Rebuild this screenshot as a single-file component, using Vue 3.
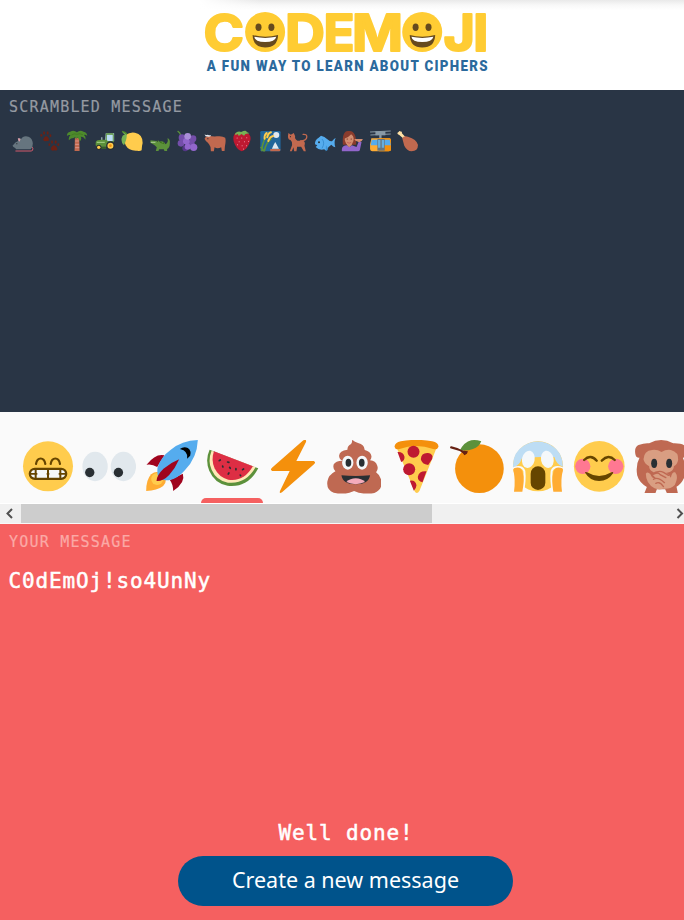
<script setup>
// Small icons: 22px squares, three drawing units to the pixel.
const scrambled = [
  { name: 'rat', box: '34.5 114 66 66', art: `<path d="M46 177H92Q98 177 97 169Q96 163 90 164" fill="none" stroke="#d45b6d" stroke-width="3" stroke-linecap="round"/><path d="M36 161Q45 149 53 147Q51 140 58 139Q64 142 66 136Q74 130 84 134Q96 139 97 154Q98 165 90 172H47Q45 167 39 165Z" fill="#66757f"/><path d="M52 139Q58 137 60 142L57 149Q52 146 52 139" fill="#d99da8"/><circle cx="49" cy="155" r="1.8" fill="#292f33"/>` },
  { name: 'paws', box: '116.9 114 66 66', art: `<g fill="#6b2115"><path d="M129 143Q133 133 138 133Q144 133 147 143Q147 148 140 147Q132 149 129 143M152 171Q156 160 162 160Q168 160 172 171Q172 177 164 175Q154 178 152 171"/><ellipse cx="124" cy="130" rx="3" ry="4"/><ellipse cx="132" cy="123" rx="3" ry="5"/><ellipse cx="143" cy="123" rx="3" ry="5"/><ellipse cx="151" cy="131" rx="3" ry="4"/><ellipse cx="148" cy="158" rx="3" ry="4"/><ellipse cx="156" cy="150" rx="3" ry="5"/><ellipse cx="167" cy="150" rx="3" ry="5"/><ellipse cx="175" cy="158" rx="3" ry="4"/></g>` },
  { name: 'palm', box: '199.3 114 66 66', art: `<path d="M226 137H239L240 177H225Z" fill="#c1694f"/><path d="M227 147h11M227 157h11M227 167h12" stroke="#e6aaaa" stroke-width="2"/><path d="M232 121Q223 113 212 119Q202 120 202 132Q208 127 213 130Q206 134 208 145Q214 138 222 138L227 135L229 142L234 136Q239 143 241 148Q248 140 243 134Q253 133 257 143Q260 134 253 129Q258 127 263 132Q263 121 252 119Q241 112 232 121" fill="#4d8a2c"/><path d="M216 129Q225 123 232 127Q240 123 250 128" fill="none" stroke="#3e721d" stroke-width="2"/>` },
  { name: 'tractor', box: '281.7 114 66 66', art: `<path d="M317 124H342V148H315Z" fill="#bbddf5"/><path d="M318 124h22v4h-22zM317 127h3v20h-3zM338 127h3v22h-3z" fill="#5c913b"/><path d="M305 136v11" stroke="#99aab5" stroke-width="4"/><path d="M287 150Q289 143 304 143H319L324 148H340V164H289Q285 160 287 150" fill="#5c913b"/><path d="M290 151h24" stroke="#a6d388" stroke-width="3"/><circle cx="331" cy="161" r="13" fill="#292f33"/><circle cx="331" cy="161" r="9" fill="#ffcc4d"/><circle cx="331" cy="161" r="4" fill="#f4900c"/><circle cx="296" cy="166" r="8" fill="#292f33"/><circle cx="296" cy="166" r="5" fill="#ffcc4d"/><path d="M304 168h14" stroke="#3e721d" stroke-width="4"/>` },
  { name: 'lemon', box: '364.1 114 66 66', art: `<path d="M378 129Q391 119 406 122Q430 127 429 153Q427 159 426 175Q420 178 413 176Q388 178 378 160Q372 145 378 129" fill="#ffcc4d"/><path d="M368 119Q377 120 381 127Q383 139 373 160Q364 154 366 139Q367 130 376 127Q369 124 368 119" fill="#77b255"/><path d="M367 118Q377 119 382 126" stroke="#4d8a2c" stroke-width="4" fill="none"/>` },
  { name: 'crocodile', box: '446.6 114 66 66', art: `<path d="M451 145L469 147Q474 141 478 149Q491 145 496 157Q506 151 502 139Q511 141 509 155Q509 167 501 171V177H493L491 172H477L475 177H467L470 166Q464 158 451 152Z" fill="#5c913b"/><path d="M452 151h14" stroke="#d5e5c8" stroke-width="2"/><circle cx="472" cy="147" r="2" fill="#292f33"/><path d="M479 152l4-5 3 7 5-4 2 7" fill="#3e721d"/>` },
  { name: 'grapes', box: '529 114 66 66', art: `<path d="M535 118Q541 121 543 130" fill="none" stroke="#5c913b" stroke-width="4" stroke-linecap="round"/><g fill="#553788"><circle cx="557" cy="169" r="9"/><circle cx="567" cy="151" r="13"/></g><g fill="#744eaa"><circle cx="547" cy="137" r="10"/><circle cx="580" cy="140" r="10"/><circle cx="544" cy="154" r="10"/><circle cx="575" cy="154" r="10"/></g><g fill="#9266cc"><circle cx="560" cy="148" r="10"/><circle cx="564" cy="164" r="9"/><circle cx="582" cy="166" r="11"/></g><circle cx="564" cy="133" r="10" fill="#aa8dd8"/>` },
  { name: 'ox', box: '-18.6 30 66 66', art: `<path d="M-13 50L-4 47Q7 50 20 49Q37 47 45 53Q48 62 44 80L43 93H35L33 82Q22 88 13 82L11 94H2L1 81Q-3 72 -7 68L-13 63L-17 56Z" fill="#c1694f"/><path d="M-17 43Q-14 47 -7 44Q0 48 3 44Q2 51 -5 50L-14 49Z" fill="#e1e8ed"/><circle cx="-7" cy="56" r="1.7" fill="#292f33"/>` },
  { name: 'strawberry', box: '63.7 30 66 66', art: `<path d="M76 40Q68 49 72 65Q80 89 96 94Q113 90 121 64Q126 49 115 40Z" fill="#be1931"/><path d="M77 39Q88 32 94 36Q109 29 111 36L119 40L107 42L103 47L95 42L87 48L84 42L76 46Z" fill="#77b255"/><g fill="#f4abba"><circle cx="82" cy="54" r="1.5"/><circle cx="96" cy="54" r="1.5"/><circle cx="111" cy="53" r="1.5"/><circle cx="88" cy="65" r="1.5"/><circle cx="104" cy="65" r="1.5"/><circle cx="116" cy="64" r="1.5"/><circle cx="83" cy="74" r="1.5"/><circle cx="97" cy="77" r="1.5"/><circle cx="110" cy="77" r="1.5"/><circle cx="101" cy="87" r="1.5"/></g>` },
  { name: 'moon viewing', box: '146.2 30 66 66', art: `<rect x="150" y="33" width="61" height="61" rx="4" fill="#226699"/><circle cx="198" cy="45" r="9" fill="#e1e8ed"/><path d="M155 94Q155 57 178 43M162 94Q166 68 184 56M151 81L162 94" fill="none" stroke="#5c913b" stroke-width="5"/><path d="M163 56Q162 45 169 39M171 52Q174 39 182 37M174 63Q180 49 189 48" stroke="#ffcc4d" stroke-width="6" stroke-linecap="round"/><path d="M180 87H210V91Q210 94 207 94H180Z" fill="#c1694f"/><path d="M185 86L190 75L195 66L200 75L206 86Z" fill="#e1e8ed"/>` },
  { name: 'cat', box: '228.6 30 66 66', art: `<path d="M272 63Q291 61 291 50Q291 42 280 43" fill="none" stroke="#c1694f" stroke-width="4" stroke-linecap="round"/><path d="M236 39L243 44L252 39L256 49Q254 58 263 62H279Q288 64 284 77L288 94H282L274 80H262L260 94H253L251 82L246 94H240L247 75Q249 66 242 60Q231 59 236 39" fill="#c1694f"/><circle cx="242" cy="50" r="1.7" fill="#292f33"/>` },
  { name: 'fish', box: '311 30 66 66', art: `<path d="M325 53L332 47Q344 50 349 56Q359 65 365 64Q374 52 376 55Q370 65 375 82Q368 81 363 74Q354 80 350 88Q346 94 342 88Q326 92 316 81L321 76L314 73Q313 59 325 53" fill="#55acee"/><path d="M335 57Q345 68 335 85" fill="none" stroke="#2a80c5" stroke-width="2"/><circle cx="326" cy="67" r="3" fill="#292f33"/><path d="M347 76Q354 84 352 90L346 94Z" fill="#3b94d9"/>` },
  { name: 'woman tipping hand', box: '393.4 30 66 66', art: `<path d="M399 74Q396 33 415 33Q440 30 439 74Z" fill="#8a3c2d"/><ellipse cx="418" cy="57" rx="13.500" ry="18" fill="#d28d70"/><path d="M403 56Q418 51 424 43Q431 48 435 56Q435 34 417 34Q402 35 403 56" fill="#8a3c2d"/><path d="M396 94V87Q398 76 411 76Q419 84 426 76L440 81L447 64L455 66L450 90Q449 94 444 94Z" fill="#9266cc"/><path d="M411 75L418 82L426 75V71H411ZM433 57H459Q457 65 448 67L437 62Z" fill="#d28d70"/><circle cx="412" cy="57" r="1.800" fill="#662113"/><circle cx="424" cy="57" r="1.800" fill="#662113"/><path d="M412 67Q418 72 424 67" fill="none" stroke="#be4a48" stroke-width="2"/>` },
  { name: 'cable car', box: '475.8 30 66 66', art: `<path d="M479 36L541 33M480 45L541 42" stroke="#8899a6" stroke-width="3"/><path d="M495 34H525V46H495Z" fill="#8899a6"/><path d="M510 43V59" stroke="#8899a6" stroke-width="7"/><path d="M483 55H538Q543 56 543 75V85Q543 94 534 94H486Q479 94 479 85V73Z" fill="#ffac33"/><path d="M506 55H538Q543 56 543 75V85Q543 94 534 94H506Z" fill="#f4900c"/><path d="M484 59H538L541 76H481Z" fill="#55acee"/><path d="M501 57H523V92H501Z" fill="#66757f"/><path d="M503 60H510V83H503ZM514 60H521V83H514Z" fill="#66aedd"/>` },
  { name: 'drumstick', box: '558.2 30 66 66', art: `<path d="M564 43Q560 38 566 36Q569 30 573 35Q577 34 576 40L587 52L582 57L568 45Z" fill="#ffe1a5"/><path d="M577 55Q581 46 594 50Q620 58 624 74Q625 93 605 94Q591 93 583 77Z" fill="#c1694f"/>` }
]

// Key strip icons: 54px squares at the same scale.
const keys = [
  { name: 'grin', box: '63 45 162 162', art: `<circle cx="144" cy="124" r="75" fill="#ffcc4d"/><path d="M108 117C112 95 132 95 136 117M152 117C156 95 176 95 180 117" fill="none" stroke="#664500" stroke-width="6.500" stroke-linecap="round"/><rect x="89.500" y="131.500" width="109" height="30" rx="15" fill="#f5f8fa" stroke="#664500" stroke-width="7"/><path d="M107 133V160M144 133V160M181 133V160" stroke="#664500" stroke-width="6"/><path d="M91 146.500H197" stroke="#664500" stroke-width="5"/><path d="M112 137h28v18h-28zM148 137h28v18h-28z" fill="#f5f8fa"/>` },
  { name: 'eyes', box: '246.75 45 162 162', art: `<g fill="#e1e8ed"><ellipse cx="286" cy="124.500" rx="38" ry="44"/><ellipse cx="371" cy="124.500" rx="38" ry="44"/></g><g fill="#292f33"><circle cx="270" cy="142.500" r="14"/><circle cx="356" cy="142.500" r="14"/></g>` },
  { name: 'rocket', box: '430.5 45 162 162', art: `<path d="M492 91Q466 84 438 119Q455 116 470 126ZM547 146Q556 172 518 198Q518 178 508 165Z" fill="#a0041e"/><path d="M437 198Q437 164 452 148Q469 134 486 148Q505 166 488 183Q470 197 437 198" fill="#ffac33"/><circle cx="470" cy="162" r="18" fill="#ffcc4d"/><path d="M592 45Q544 46 510 75Q481 96 471 128Q469 150 475 158Q482 166 505 166Q530 163 553 136Q590 98 592 45" fill="#55acee"/><path d="M536 103Q511 113 489 131Q468 151 468 168Q488 169 506 150Q525 129 536 103" fill="#a0041e"/><path d="M538 72Q550 63 562 69Q574 78 569 92L560 101Q564 78 538 72" fill="#000"/>` },
  { name: 'watermelon', box: '14.25 45 162 162', art: `<path d="M28 74Q14 105 27 137Q43 175 82 182Q143 189 174 130Z" fill="#5c913b"/><path d="M34 77Q22 107 34 134Q48 166 83 173Q136 179 166 127Z" fill="#ffe8b6"/><path d="M41 79Q32 107 43 130Q56 157 84 164Q130 172 158 124Z" fill="#dd2e44"/><g stroke="#292f33" stroke-width="5" stroke-linecap="round"><path d="M57 107l3-2M82 111l4 1M67 123l1 3M88 127l2 3M107 131v3M127 134l3-2M84 147l2-3M120 150l1 2"/></g>` },
  { name: 'bolt', box: '198 45 162 162', art: `<path d="M310 46Q320 41 318 51L289 108H341Q349 111 342 118L246 202Q237 207 240 198L269 138H217Q209 135 216 128Z" fill="#f4900c"/>` },
  { name: 'poop', box: '381.75 45 162 162', art: `<path d="M457 44Q464 50 475 54Q494 58 495 75Q513 80 515 93Q516 100 511 106Q528 107 532 121Q537 132 529 142Q542 151 545 168Q549 193 524 204Q504 208 477 203L463 198L449 203Q427 208 402 203Q379 195 383 169Q386 150 407 139Q398 130 402 118Q407 108 428 107Q418 102 418 92Q419 77 443 74Q443 62 454 57Q458 53 457 44" fill="#bf6952"/><g fill="#f5f8fa"><ellipse cx="444" cy="113" rx="17" ry="21"/><ellipse cx="487" cy="113" rx="17" ry="21"/></g><g fill="#292f33"><ellipse cx="446" cy="113" rx="8.500" ry="12"/><ellipse cx="486" cy="113" rx="8.500" ry="12"/></g><path d="M425 151Q468 155 511 151Q507 178 468 178Q429 178 425 151" fill="#292f33"/><path d="M440 171Q451 160 468 160Q485 160 496 171Q467 184 440 171" fill="#f4abba"/>` },
  { name: 'pizza', box: '25.5 45 162 162', art: `<path d="M49 69Q106 50 168 69L117 197Q109 210 102 198Z" fill="#ffcc4d"/><path d="M42 65Q43 53 61 49Q107 40 155 49Q174 53 174 65Q170 76 158 72Q107 54 57 72Q45 76 42 65" fill="#f4900c"/><g fill="#be1931"><circle cx="99" cy="80" r="18"/><path d="M155 102L143 120Q124 118 121 103Q122 84 140 84Q151 83 156 93Z"/><circle cx="86" cy="133" r="18"/><path d="M51 81Q69 80 72 95Q73 106 62 111ZM138 139L126 172Q111 168 112 155Q116 137 138 139M88 167Q105 164 108 181Q107 192 100 197Z"/></g>` },
  { name: 'tangerine', box: '209.25 45 162 162', art: `<circle cx="297.500" cy="131" r="73" fill="#f4900c"/><path d="M239 76Q252 51 273 46Q286 43 303 49Q297 66 278 72Q262 78 239 76" fill="#5c913b"/><path d="M213 67Q235 71 254 84" fill="none" stroke="#662113" stroke-width="7" stroke-linecap="round"/><path d="M240 76L263 79L260 86L252 91L248 84Z" fill="#662113"/>` },
  { name: 'scream', box: '393 45 162 162', art: `<circle cx="474" cy="124" r="75" fill="#ffcc4d"/><path d="M399 124Q398 82 431 62Q474 37 516 62Q548 80 549 126Q529 119 523 96Q474 94 425 101Q419 121 399 128Z" fill="#bdddf4"/><path d="M399 130Q426 119 433 138Q436 165 429 201M549 130Q522 119 515 138Q512 165 519 201" fill="none" stroke="#fafafa" stroke-width="6"/><path d="M402 130Q423 121 428 143Q434 164 427 200H402Q407 165 400 134ZM547 130Q525 121 520 143Q514 164 520 200H546Q541 165 549 134Z" fill="#ffac33"/><g fill="#f5f8fa"><ellipse cx="445" cy="103" rx="19" ry="26" transform="rotate(12 445 103)"/><ellipse cx="502" cy="103" rx="19" ry="26" transform="rotate(-12 502 103)"/></g><rect x="452" y="124" width="44" height="71" rx="22" fill="#664500"/>` },
  { name: 'blush', box: '201.75 45 162 162', art: `<circle cx="283.500" cy="124" r="76" fill="#ffcc4d"/><g fill="#ff7892"><circle cx="234" cy="124" r="23"/><circle cx="333" cy="124" r="23"/></g><path d="M238 105Q257 86 276 107M291 107Q311 86 330 105" fill="none" stroke="#664500" stroke-width="7" stroke-linecap="round"/><path d="M241 143Q240 139 247 142Q283 164 320 142Q327 139 325 145Q310 168 283 168Q256 168 241 143" fill="#664500"/>` },
  { name: 'monkey', box: '385.5 45 162 162', art: `<path d="M399 60Q419 53 431 55Q467 35 503 55Q530 54 540 64Q548 75 544 92Q540 98 532 98Q543 124 539 150Q530 176 513 185L517 204H484L479 193H454L450 204H417L424 186Q401 173 395 151Q390 119 402 98Q392 99 390 89Q385 67 399 60" fill="#bf6952"/><path d="M468 81Q481 73 496 75Q520 81 518 105Q515 119 505 124Q505 145 468 145Q431 145 431 124Q416 116 414 103Q415 77 440 75Q455 73 468 81" fill="#d99e82"/><g fill="#292f33"><ellipse cx="446" cy="115" rx="9" ry="14"/><ellipse cx="491" cy="115" rx="9" ry="14"/></g><path d="M421 146Q426 138 435 148Q440 163 451 159L441 149Q441 141 455 137Q469 131 480 143Q488 144 496 158Q500 139 509 142Q520 155 508 180Q493 194 472 191Q461 196 447 190Q421 175 421 146" fill="#d99e82"/><path d="M438 148Q459 134 474 142L489 151M441 149Q457 139 464 149L481 158M444 163Q456 154 477 173M451 175Q463 168 474 185" fill="none" stroke="#bf6952" stroke-width="4" stroke-linecap="round"/>` }
]

const selected = 3
</script>

<template>
  <main class="page">
    <header class="head">
      <svg class="logo" width="290" height="90" viewBox="200 0 290 90">
        <g class="wordmark">
          <text x="203.500" y="51" textLength="40.500" lengthAdjust="spacingAndGlyphs">C</text>
          <text x="285" y="51" textLength="40" lengthAdjust="spacingAndGlyphs">D</text>
          <text x="323.500" y="51" textLength="31" lengthAdjust="spacingAndGlyphs">E</text>
          <text x="352" y="51" textLength="51" lengthAdjust="spacingAndGlyphs">M</text>
          <text x="443.500" y="51" textLength="31.500" lengthAdjust="spacingAndGlyphs">J</text>
          <text x="473" y="51" textLength="15.500" lengthAdjust="spacingAndGlyphs">I</text>
        </g>
        <g v-for="cx in [265.1, 422.2]" :key="cx" :transform="`translate(${cx} 32)`">
          <circle r="20" fill="#ffcc33" />
          <ellipse cx="-6.600" cy="-4.800" rx="3" ry="3.700" fill="#664a1e" />
          <ellipse cx="6.300" cy="-4.800" rx="3" ry="3.700" fill="#664a1e" />
          <path d="M-12.500 3Q0 6.500 13 3Q12.500 15.500 0 15.500Q-12 15.500-12.500 3Z" fill="#664a1e" />
          <path d="M-10.800 4.800Q0 7 11.200 4.800Q10 10 0 10Q-10 10-10.800 4.800Z" fill="#fff" />
        </g>
        <g transform="translate(206.800 71) scale(0.86 1)">
          <text class="tagline" x="0" y="0" textLength="326.500" lengthAdjust="spacing">A FUN WAY TO LEARN ABOUT CIPHERS</text>
        </g>
      </svg>
    </header>

    <section class="scrambled">
      <h2 class="label">SCRAMBLED MESSAGE</h2>
      <div class="cipher">
        <span v-for="e in scrambled" :key="e.name" class="glyph">
          <svg width="22" height="22" :viewBox="e.box" v-html="e.art"></svg>
        </span>
      </div>
    </section>

    <nav class="keys">
      <div v-for="(e, i) in keys" :key="e.name" class="key" :class="{ active: i === selected }">
        <svg width="54" height="54" :viewBox="e.box" v-html="e.art"></svg>
      </div>
    </nav>
    <div class="scrollbar">
      <svg class="arrow" width="21" height="19" viewBox="0 0 21 19"><path d="M12 5L7.500 9.500L12 14" /></svg>
      <div class="thumb"></div>
      <svg class="arrow end" width="21" height="19" viewBox="0 0 21 19"><path d="M14.500 5L19 9.500L14.500 14" /></svg>
    </div>

    <section class="answer">
      <h2 class="label">YOUR MESSAGE</h2>
      <p class="plain">C0dEmOj!so4UnNy</p>
      <div class="result">
        <p class="plain">Well done!</p>
        <button class="create">Create a new message</button>
      </div>
    </section>
  </main>
</template>

<style>
body { margin: 0; overflow: hidden; }
</style>

<style scoped>
.page { width: 684px; height: 920px; overflow: hidden; display: flex; flex-direction: column; }
.head {
  height: 90px; box-sizing: border-box; padding-left: 200px; flex: none;
  background: linear-gradient(90deg, #fff 200px, rgba(255, 255, 255, 0) 260px), linear-gradient(#e9e9e9, #f8f8f8 5px, #fff 10px);
}
.logo { display: block; overflow: visible; }
.wordmark { font: 700 51px Inter, sans-serif; fill: #ffcc33; stroke: #ffcc33; stroke-width: 2px; stroke-linejoin: round; }
.tagline { font: 900 15.500px Roboto, sans-serif; fill: #2b6a9d; }
.scrambled { height: 322px; background: #293545; flex: none; color: #959aa2; }
.label { margin: 0; padding: 7px 0 0 9px; font: 400 15px/20px "DejaVu Sans Mono", monospace; letter-spacing: 1.200px; -webkit-text-stroke: 0.200px currentColor; }
.cipher { display: flex; padding: 13px 0 0 8.770px; }
.glyph { width: 27.470px; flex: none; display: flex; justify-content: center; }
.keys { height: 91px; flex: none; background: #fafafa; display: flex; padding-left: 17.375px; overflow: hidden; }
.key { width: 61.250px; flex: none; box-sizing: border-box; padding-top: 28px; display: flex; flex-direction: column; align-items: center; }
.key svg { flex: none; }
.key.active::after { content: ""; width: 62px; height: 5px; margin-top: 4px; flex: none; border-radius: 5px 5px 0 0; background: #f56060; }
.scrollbar { height: 19px; border-top: 1px solid #fff; border-bottom: 1px solid #f8f8f8; background: #f0f0f0; display: flex; flex: none; }
.thumb { width: 411px; background: #cdcdcd; }
.arrow { fill: none; stroke: #505050; stroke-width: 2; flex: none; }
.end { margin-left: auto; }
.answer { flex: 1; background: #f56060; color: #fff; display: flex; flex-direction: column; }
.answer .label { padding-top: 8px; color: #fba9a6; }
.plain { margin: 0; font: 400 21px/30px "DejaVu Sans Mono", monospace; letter-spacing: 0.860px; -webkit-text-stroke: 0.500px #fff; }
.answer > .plain { padding: 14px 0 0 8.500px; }
.result { margin-top: auto; padding: 0 0 14px 7px; display: flex; flex-direction: column; align-items: center; gap: 8px; }
.result .plain { padding-left: 1px; }
.create { width: 335px; height: 50px; border: 0; border-radius: 25px; padding: 0 0 4px; background: #00538b; color: #fff; font: 400 21.500px "Noto Sans", sans-serif; }
</style>
